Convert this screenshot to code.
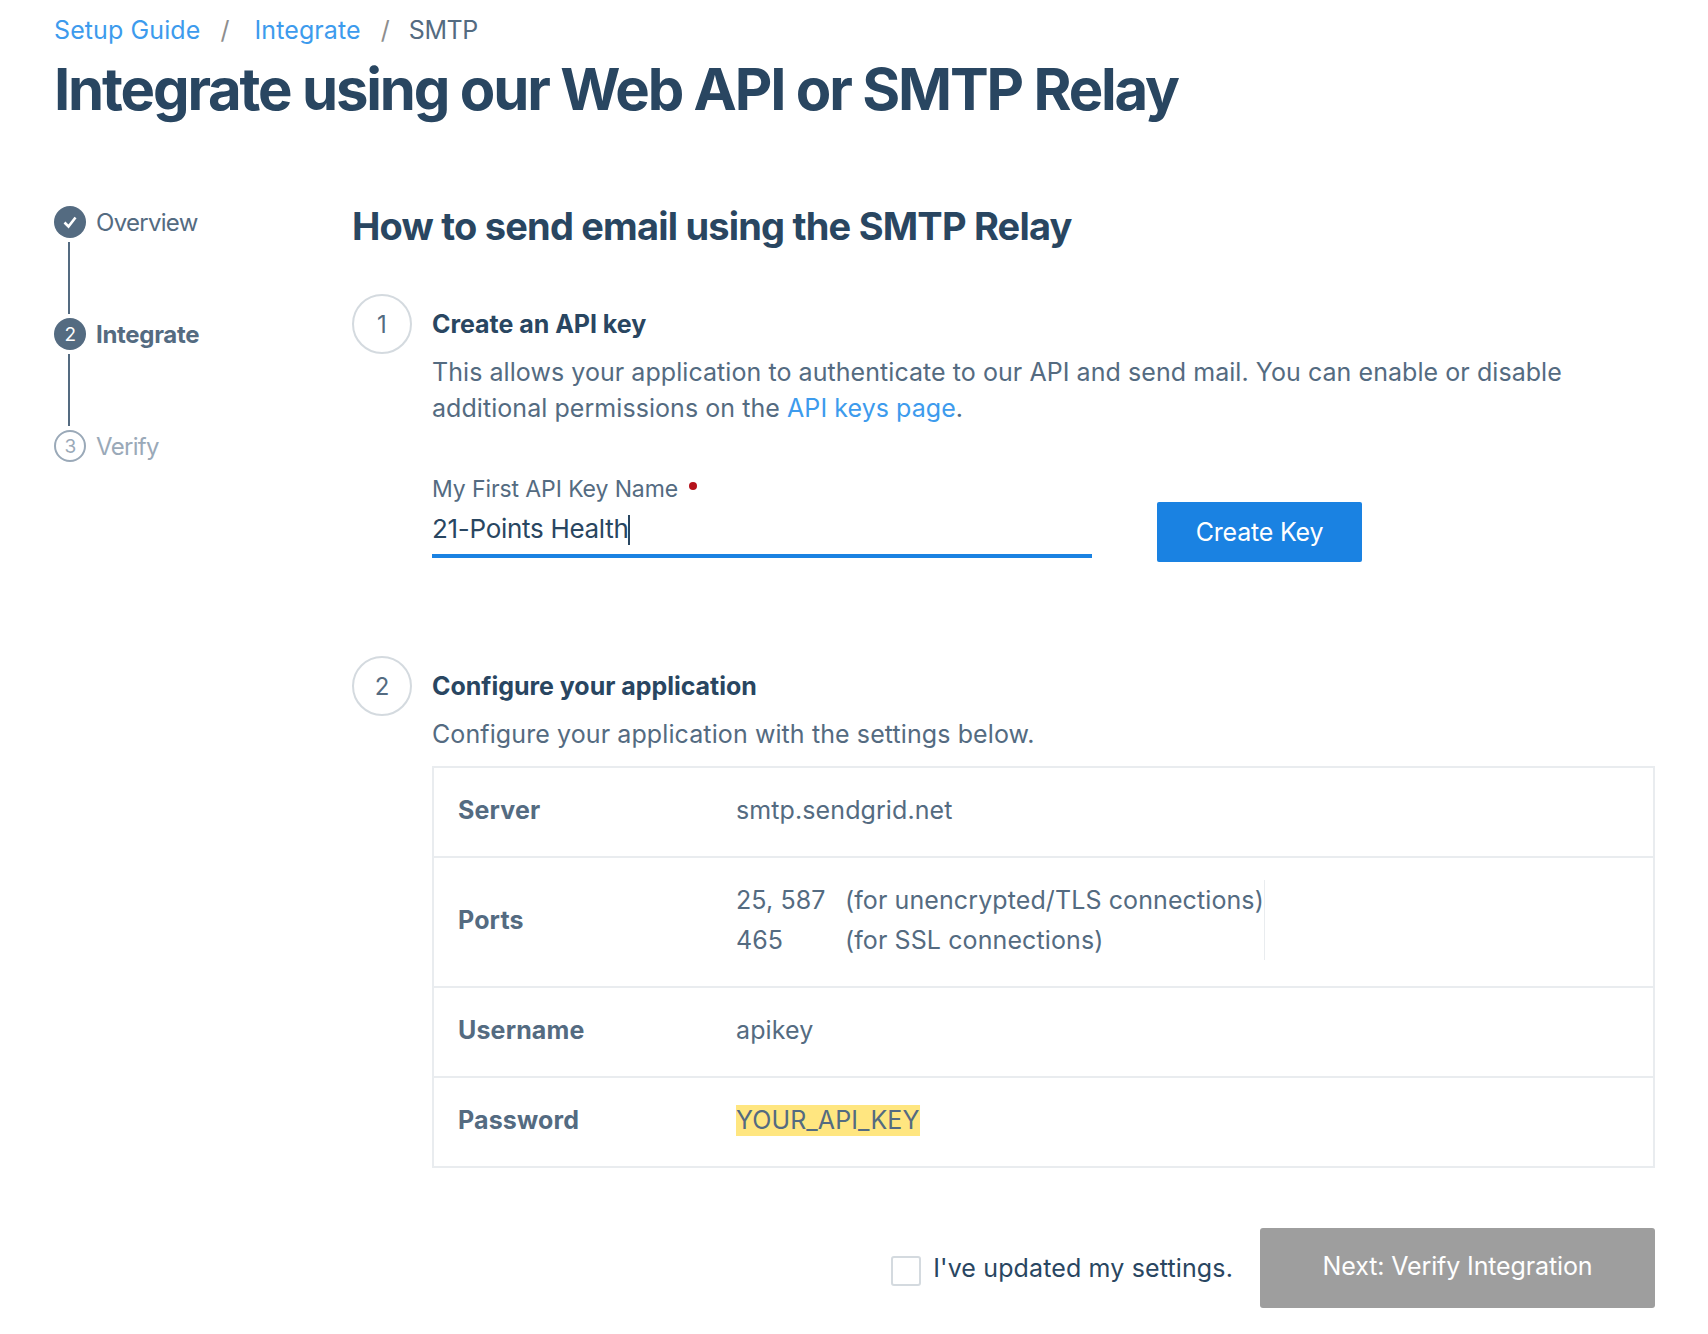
<script>
  const rows = [
    { label: 'Server', value: 'smtp.sendgrid.net' },
    { label: 'Username', value: 'apikey' }
  ];
</script>

<div class="page">
  <nav class="crumbs">
    <a href="#a">Setup Guide</a><span class="sep">/</span><a href="#b">Integrate</a><span class="sep last">/</span><span class="cur">SMTP</span>
  </nav>
  <h1>Integrate using our Web API or SMTP Relay</h1>

  <div class="body">
    <aside class="side">
      <div class="stage done">
        <span class="dot">
          <svg width="14" height="14" viewBox="0 0 14 14"><path d="M1.5 7.5 L5.5 11.5 L12.5 2.5" fill="none" stroke="#fff" stroke-width="2.6"/></svg>
        </span>
        <span class="name">Overview</span>
      </div>
      <div class="line"></div>
      <div class="stage active"><span class="dot">2</span><span class="name">Integrate</span></div>
      <div class="line"></div>
      <div class="stage todo"><span class="dot">3</span><span class="name">Verify</span></div>
    </aside>

    <main class="main">
      <h2>How to send email using the SMTP Relay</h2>

      <section class="step first">
        <div class="num">1</div>
        <div class="content">
          <h3>Create an API key</h3>
          <p>This allows your application to authenticate to our API and send mail. You can enable or disable additional permissions on the <a href="#c">API keys page</a>.</p>
          <div class="form">
            <div class="field">
              <div class="flabel">My First API Key Name <span class="req"></span></div>
              <div class="fvalue">21-Points Health<span class="caret"></span></div>
            </div>
            <button class="create">Create Key</button>
          </div>
        </div>
      </section>

      <section class="step second">
        <div class="num">2</div>
        <div class="content">
          <h3>Configure your application</h3>
          <p class="single">Configure your application with the settings below.</p>
          <div class="table">
            <div class="row">
              <div class="key">{rows[0].label}</div>
              <div class="val">{rows[0].value}</div>
            </div>
            <div class="row ports">
              <div class="key">Ports</div>
              <div class="portgrid">
                <span>25, 587</span><span>(for unencrypted/TLS connections)</span>
                <span>465</span><span>(for SSL connections)</span>
              </div>
            </div>
            <div class="row">
              <div class="key">{rows[1].label}</div>
              <div class="val">{rows[1].value}</div>
            </div>
            <div class="row">
              <div class="key">Password</div>
              <div class="val"><mark>YOUR_API_KEY</mark></div>
            </div>
          </div>
        </div>
      </section>

      <div class="footer">
        <label class="check"><span class="box"></span>I've updated my settings.</label>
        <button class="next">Next: Verify Integration</button>
      </div>
    </main>
  </div>
</div>

<style>
  :global(body) { margin: 0; background: #fff; }
  .page {
    box-sizing: border-box;
    width: 1708px;
    height: 1334px;
    padding: 12px 53px 0 54px;
    font-family: Inter, "Liberation Sans", sans-serif;
    color: #546b81;
    overflow: hidden;
  }
  a { color: #3d9bed; text-decoration: none; }
  .crumbs { font-size: 25px; line-height: 36px; letter-spacing: 0.1px; display: flex; }
  .sep { color: #8e8e8e; margin: 0 25px 0 20px; }
  .sep.last { margin-right: 19px; }
  .cur { letter-spacing: -0.4px; }
  h1 {
    margin: 5px 0 0;
    font-size: 58px;
    line-height: 72px;
    font-weight: 700;
    letter-spacing: -2.17px;
    color: #294661;
  }
  .body { display: flex; margin-top: 81px; }
  .side { width: 298px; flex: none; }
  .stage { display: flex; align-items: center; height: 32px; font-size: 24px; letter-spacing: -0.7px; }
  .dot {
    box-sizing: border-box;
    width: 32px; height: 32px; border-radius: 50%;
    display: flex; align-items: center; justify-content: center;
    background: #546b81; color: #fff;
    font-size: 19px; margin-right: 10px; flex: none;
  }
  .active .name { font-weight: 700; letter-spacing: -0.3px; }
  .todo { color: #9aa9b8; }
  .todo .dot { background: #fff; border: 2px solid #9aa9b8; color: #9aa9b8; }
  .line { width: 2px; height: 72px; background: #546b81; margin: 4px 0 4px 14px; }
  .main { flex: 1; min-width: 0; }
  h2 {
    margin: 0;
    font-size: 38px; line-height: 40px; font-weight: 700;
    letter-spacing: -0.8px; color: #294661;
  }
  .step { display: flex; }
  .first { margin-top: 48px; }
  .second { margin-top: 94px; }
  .num {
    box-sizing: border-box;
    width: 60px; height: 60px; border-radius: 50%;
    border: 2px solid #d4dadf;
    display: flex; align-items: center; justify-content: center;
    font-size: 24px; flex: none; margin-right: 20px;
  }
  .content { flex: 1; min-width: 0; }
  h3 { margin: 14px 0 0; font-size: 25px; line-height: 32px; font-weight: 700; letter-spacing: -0.03px; color: #294661; }
  p { margin: 14px 0 0; font-size: 25px; line-height: 36px; letter-spacing: 0.06px; }
  .single { margin-top: 14px; letter-spacing: 0.1px; }
  .form { display: flex; align-items: flex-start; margin-top: 48px; }
  .field { width: 660px; border-bottom: 4px solid #1a82e2; height: 80px; box-sizing: content-box; margin-right: 65px; }
  .flabel { font-size: 23px; line-height: 30px; letter-spacing: -0.1px; }
  .req { display: inline-block; width: 8px; height: 8px; background: #b5121b; border-radius: 50%; margin-left: 5px; vertical-align: 7px; }
  .fvalue { font-size: 26px; line-height: 36px; margin-top: 7px; color: #294661; letter-spacing: -0.3px; }
  .caret { display: inline-block; width: 2px; height: 30px; background: #294661; vertical-align: -7px; }
  button { font-family: inherit; border: 0; color: #fff; cursor: pointer; padding: 0; }
  .create {
    width: 205px; height: 60px; margin-top: 28px;
    background: #1a82e2; border-radius: 2px; font-size: 25px; letter-spacing: -0.2px;
  }
  .table { margin-top: 14px; border: 2px solid #e9ecef; border-bottom-width: 0; }
  .row {
    box-sizing: border-box;
    display: flex; align-items: center; height: 90px; padding: 0 0 4px 24px;
    border-bottom: 2px solid #e9ecef; font-size: 25px; letter-spacing: 0.1px;
  }
  .row.ports { height: 130px; }
  .key { width: 278px; flex: none; font-weight: 700; letter-spacing: 0.15px; }
  .portgrid {
    display: grid; grid-template-columns: 109px auto; row-gap: 4px; line-height: 36px;
    border-right: 1px solid #e9ecef; padding: 2px 0;
  }
  mark { background: #ffe680; color: #546b81; padding: 0; display: inline-block; line-height: 31px; }
  .footer { display: flex; justify-content: flex-end; align-items: center; margin-top: 60px; }
  .check { display: flex; align-items: center; font-size: 25px; color: #294661; letter-spacing: 0.14px; margin-right: 27px; }
  .box { width: 30px; height: 30px; box-sizing: border-box; border: 2px solid #d4dadf; border-radius: 3px; margin: 6px 12px 0 0; }
  .next {
    width: 395px; height: 80px; padding-bottom: 4px; background: #9e9e9e; border-radius: 3px;
    font-size: 25px; letter-spacing: -0.13px;
  }
</style>
